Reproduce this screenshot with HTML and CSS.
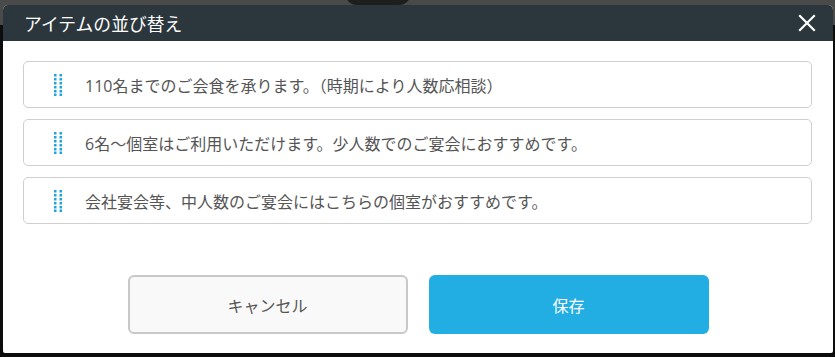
FILE: index.html
```html
<html>
<head>
  <link rel="stylesheet" href="styles.css">
</head>
<body>
  <div class="backdrop-pill"></div>

  <!-- Sort dialog -->
  <div class="sort-modal">
    <div class="sort-modal-header">
      <h1>アイテムの並び替え</h1>
      <button class="close-button" aria-label="close">
        <svg width="18" height="18" viewBox="0 0 18 18">
          <path d="M2 2 L16 16 M16 2 L2 16" stroke="#fff" stroke-width="2.2" stroke-linecap="square"/>
        </svg>
      </button>
    </div>

    <div class="sort-modal-body">
      <ul class="sort-list">
        <li class="sort-item">
          <svg class="drag-handle" width="8" height="22" viewBox="0 0 8 22">
            <g fill="#1ea5e0">
              <rect x="0" y="0" width="2.5" height="2.5"/><rect x="5.5" y="0" width="2.5" height="2.5"/>
              <rect x="0" y="4" width="2.5" height="2.5"/><rect x="5.5" y="4" width="2.5" height="2.5"/>
              <rect x="0" y="8" width="2.5" height="2.5"/><rect x="5.5" y="8" width="2.5" height="2.5"/>
              <rect x="0" y="12" width="2.5" height="2.5"/><rect x="5.5" y="12" width="2.5" height="2.5"/>
              <rect x="0" y="16" width="2.5" height="2.5"/><rect x="5.5" y="16" width="2.5" height="2.5"/>
              <rect x="0" y="19.5" width="2.5" height="2.5"/><rect x="5.5" y="19.5" width="2.5" height="2.5"/>
            </g>
          </svg>
          <span>110名までのご会食を承ります。（時期により人数応相談）</span>
        </li>
        <li class="sort-item">
          <svg class="drag-handle" width="8" height="22" viewBox="0 0 8 22">
            <g fill="#1ea5e0">
              <rect x="0" y="0" width="2.5" height="2.5"/><rect x="5.5" y="0" width="2.5" height="2.5"/>
              <rect x="0" y="4" width="2.5" height="2.5"/><rect x="5.5" y="4" width="2.5" height="2.5"/>
              <rect x="0" y="8" width="2.5" height="2.5"/><rect x="5.5" y="8" width="2.5" height="2.5"/>
              <rect x="0" y="12" width="2.5" height="2.5"/><rect x="5.5" y="12" width="2.5" height="2.5"/>
              <rect x="0" y="16" width="2.5" height="2.5"/><rect x="5.5" y="16" width="2.5" height="2.5"/>
              <rect x="0" y="19.5" width="2.5" height="2.5"/><rect x="5.5" y="19.5" width="2.5" height="2.5"/>
            </g>
          </svg>
          <span>6名～個室はご利用いただけます。少人数でのご宴会におすすめです。</span>
        </li>
        <li class="sort-item">
          <svg class="drag-handle" width="8" height="22" viewBox="0 0 8 22">
            <g fill="#1ea5e0">
              <rect x="0" y="0" width="2.5" height="2.5"/><rect x="5.5" y="0" width="2.5" height="2.5"/>
              <rect x="0" y="4" width="2.5" height="2.5"/><rect x="5.5" y="4" width="2.5" height="2.5"/>
              <rect x="0" y="8" width="2.5" height="2.5"/><rect x="5.5" y="8" width="2.5" height="2.5"/>
              <rect x="0" y="12" width="2.5" height="2.5"/><rect x="5.5" y="12" width="2.5" height="2.5"/>
              <rect x="0" y="16" width="2.5" height="2.5"/><rect x="5.5" y="16" width="2.5" height="2.5"/>
              <rect x="0" y="19.5" width="2.5" height="2.5"/><rect x="5.5" y="19.5" width="2.5" height="2.5"/>
            </g>
          </svg>
          <span>会社宴会等、中人数のご宴会にはこちらの個室がおすすめです。</span>
        </li>
      </ul>

      <div class="sort-actions">
        <button class="btn btn-cancel">キャンセル</button>
        <button class="btn btn-save">保存</button>
      </div>
    </div>
  </div>
</body>
</html>
```

FILE: styles.css
```css
/* General styling */
body {
  margin: 0;
  height: 357px;
  overflow: hidden;
  background: linear-gradient(#4a4a4a 0, #4a4a4a 25px, #0c0c0c 25px);
  font-family: 'Open Sans', 'Noto Sans CJK JP', sans-serif;
  padding: 5px 2px 0 3px;
  box-sizing: border-box;
}

/* dark shape peeking above the dialog */
.backdrop-pill {
  position: absolute;
  top: -20px;
  left: 345px;
  width: 66px;
  height: 25px;
  border-radius: 12px;
  background-color: #1e1e1e;
}

/* Dialog */
.sort-modal {
  position: relative;
  width: 830px;
  height: 348px;
  background-color: #fff;
  border-radius: 5px 5px 2px 2px;
  overflow: hidden;
  display: flex;
  flex-direction: column;
}

.sort-modal-header {
  height: 36px;
  background-color: #2b373d;
  display: flex;
  align-items: center;
  justify-content: space-between;
  padding: 0 17px 0 21px;
  flex-shrink: 0;
}

.sort-modal-header h1 {
  margin: 0;
  font-size: 17.8px;
  font-weight: normal;
  color: #fff;
}

.close-button {
  background: none;
  border: none;
  padding: 0;
  width: 18px;
  height: 18px;
  cursor: pointer;
  display: flex;
}

.sort-modal-body {
  padding: 20px 21px 0 20px;
}

/* Sortable list */
.sort-list {
  list-style: none;
  margin: 0;
  padding: 0;
  display: flex;
  flex-direction: column;
  gap: 11px;
}

.sort-item {
  height: 47px;
  box-sizing: border-box;
  border: 1px solid #cfcfcf;
  border-radius: 5px;
  display: flex;
  align-items: center;
  padding-left: 30px;
  font-size: 16px;
  color: #555;
}

.drag-handle {
  flex-shrink: 0;
  margin-right: 23px;
}

/* Buttons */
.sort-actions {
  display: flex;
  justify-content: center;
  gap: 21px;
  margin-top: 51px;
  padding-left: 1px;
}

.btn {
  width: 280px;
  height: 59px;
  border-radius: 6px;
  font-family: 'Open Sans', 'Noto Sans CJK JP', sans-serif;
  font-size: 16px;
  cursor: pointer;
}

.btn-cancel {
  background-color: #f9f9f9;
  border: 2px solid #c8c8c8;
  color: #555;
}

.btn-save {
  background-color: #22ade3;
  border: none;
  color: #fff;
}
```
